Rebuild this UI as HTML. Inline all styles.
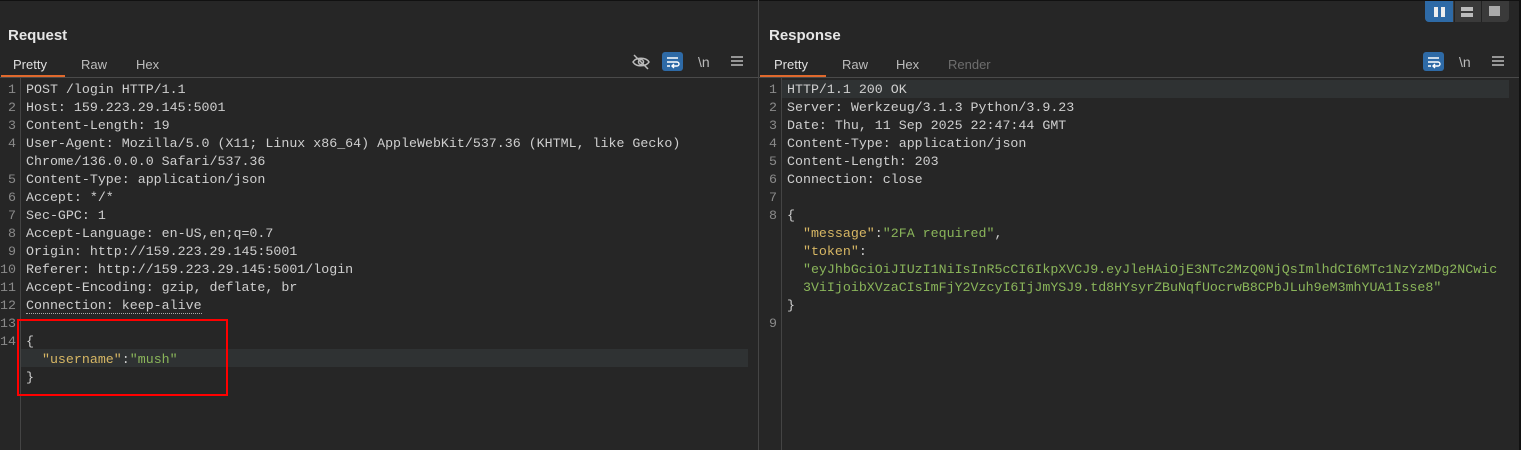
<!DOCTYPE html>
<html><head><style>
body{margin:0;width:1521px;height:450px;background:#262626;overflow:hidden;position:relative;font-family:"Liberation Sans",sans-serif;color:#d4d4d4}
.abs{position:absolute}
.title{font-weight:bold;font-size:15px;color:#e6e6e6;top:27px}
.tab{font-size:13px;color:#bdbdbd;top:57px}
.tab.dis{color:#6e6e6e}
.code{font-family:"Liberation Mono",monospace;font-size:13.3px;line-height:18px;white-space:pre;color:#cfcfcf}
.ln{font-family:"Liberation Mono",monospace;font-size:13.3px;line-height:18px;color:#8a8a8a;text-align:right;white-space:pre}
.k{color:#d7b764}.s{color:#8ab55a}.p{color:#cfcfcf}
.btn{width:21px;height:19px;border-radius:3px;background:#2e6aa6}
</style></head><body>
<div class="abs" style="left:0;top:0;width:1521px;height:1px;background:#111"></div>
<div class="abs" style="left:758px;top:0;width:1px;height:450px;background:#454545"></div>
<div class="abs" style="left:1519px;top:0;width:2px;height:450px;background:#111"></div>
<div class="abs" style="left:0;top:77px;width:758px;height:1px;background:#4a4a4a"></div>
<div class="abs" style="left:759px;top:77px;width:760px;height:1px;background:#4a4a4a"></div>
<div class="abs" style="left:20px;top:78px;width:1px;height:372px;background:#444"></div>
<div class="abs" style="left:781px;top:78px;width:1px;height:372px;background:#444"></div>
<div class="abs" style="left:1425px;top:1px;width:84px;height:21px;background:#3a3a3a;border-radius:0 0 4px 4px"></div>
<div class="abs" style="left:1425px;top:1px;width:28px;height:21px;background:#2e6aa6;border-radius:0 0 0 4px"></div>
<div class="abs" style="left:1434px;top:7px;width:4px;height:10px;background:#eee"></div>
<div class="abs" style="left:1441px;top:7px;width:4px;height:10px;background:#eee"></div>
<div class="abs" style="left:1454px;top:1px;width:1px;height:21px;background:#222"></div>
<div class="abs" style="left:1481px;top:1px;width:1px;height:21px;background:#222"></div>
<div class="abs" style="left:1461px;top:7px;width:12px;height:4px;background:#bbb"></div>
<div class="abs" style="left:1461px;top:13px;width:12px;height:4px;background:#bbb"></div>
<div class="abs" style="left:1489px;top:6px;width:11px;height:10px;background:#aaa"></div>
<div class="abs title" style="left:8px">Request</div>
<div class="abs tab" style="left:13px;color:#e0e0e0">Pretty</div>
<div class="abs tab" style="left:81px">Raw</div>
<div class="abs tab" style="left:136px">Hex</div>
<div class="abs" style="left:1px;top:75px;width:64px;height:2px;background:#e0692d"></div>
<svg class="abs" style="left:631px;top:53px" width="20" height="18" viewBox="0 0 20 18"><path d="M2 9C5 4 15 4 18 9C15 14 5 14 2 9Z" fill="none" stroke="#bbb" stroke-width="1.5"/><circle cx="10" cy="9" r="2.5" fill="none" stroke="#bbb" stroke-width="1.5"/><path d="M3 2L17 16" stroke="#bbb" stroke-width="1.5"/></svg>
<div class="abs btn" style="left:662px;top:52px"></div>
<svg class="abs" style="left:662px;top:52px" width="21" height="19"><path d="M5 6H16M5 10H15a2 2 0 0 1 0 4H10M12 12L10 14L12 16M5 14H8" fill="none" stroke="#fff" stroke-width="1.4"/></svg>
<div class="abs" style="left:698px;top:54px;font-size:14px;color:#bbb">\n</div>
<svg class="abs" style="left:730px;top:55px" width="14" height="12"><path d="M1 2H13M1 6H13M1 10H13" stroke="#bbb" stroke-width="1.5"/></svg>
<div class="abs title" style="left:769px">Response</div>
<div class="abs tab" style="left:774px;color:#e0e0e0">Pretty</div>
<div class="abs tab" style="left:842px">Raw</div>
<div class="abs tab" style="left:896px">Hex</div>
<div class="abs tab dis" style="left:948px">Render</div>
<div class="abs" style="left:760px;top:75px;width:66px;height:2px;background:#e0692d"></div>
<div class="abs btn" style="left:1423px;top:52px"></div>
<svg class="abs" style="left:1423px;top:52px" width="21" height="19"><path d="M5 6H16M5 10H15a2 2 0 0 1 0 4H10M12 12L10 14L12 16M5 14H8" fill="none" stroke="#fff" stroke-width="1.4"/></svg>
<div class="abs" style="left:1459px;top:54px;font-size:14px;color:#bbb">\n</div>
<svg class="abs" style="left:1491px;top:55px" width="14" height="12"><path d="M1 2H13M1 6H13M1 10H13" stroke="#bbb" stroke-width="1.5"/></svg>
<div class="abs" style="left:21px;top:349px;width:727px;height:18px;background:#2f3233"></div>
<div class="abs" style="left:782px;top:80px;width:727px;height:18px;background:#2f3233"></div>
<div class="abs ln" style="left:0;top:81px;width:16px">1
2
3
4

5
6
7
8
9
10
11
12
13
14</div>
<div class="abs code" style="left:26px;top:81px">POST /login HTTP/1.1
Host: 159.223.29.145:5001
Content-Length: 19
User-Agent: Mozilla/5.0 (X11; Linux x86_64) AppleWebKit/537.36 (KHTML, like Gecko)
Chrome/136.0.0.0 Safari/537.36
Content-Type: application/json
Accept: */*
Sec-GPC: 1
Accept-Language: en-US,en;q=0.7
Origin: http://159.223.29.145:5001
Referer: http://159.223.29.145:5001/login
Accept-Encoding: gzip, deflate, br
<span style="border-bottom:1px dotted #aaa">Connection: keep-alive</span>

{
  <span class="k">"username"</span>:<span class="s">"mush"</span>
}</div>
<div class="abs" style="left:17px;top:319px;width:207px;height:73px;border:2px solid #ff0000"></div>
<div class="abs ln" style="left:760px;top:81px;width:17px">1
2
3
4
5
6
7
8





9</div>
<div class="abs code" style="left:787px;top:81px">HTTP/1.1 200 OK
Server: Werkzeug/3.1.3 Python/3.9.23
Date: Thu, 11 Sep 2025 22:47:44 GMT
Content-Type: application/json
Content-Length: 203
Connection: close

{
  <span class="k">"message"</span>:<span class="s">"2FA required"</span>,
  <span class="k">"token"</span>:
  <span class="s">"eyJhbGciOiJIUzI1NiIsInR5cCI6IkpXVCJ9.eyJleHAiOjE3NTc2MzQ0NjQsImlhdCI6MTc1NzYzMDg2NCwic</span>
  <span class="s">3ViIjoibXVzaCIsImFjY2VzcyI6IjJmYSJ9.td8HYsyrZBuNqfUocrwB8CPbJLuh9eM3mhYUA1Isse8"</span>
}</div>
</body></html>
